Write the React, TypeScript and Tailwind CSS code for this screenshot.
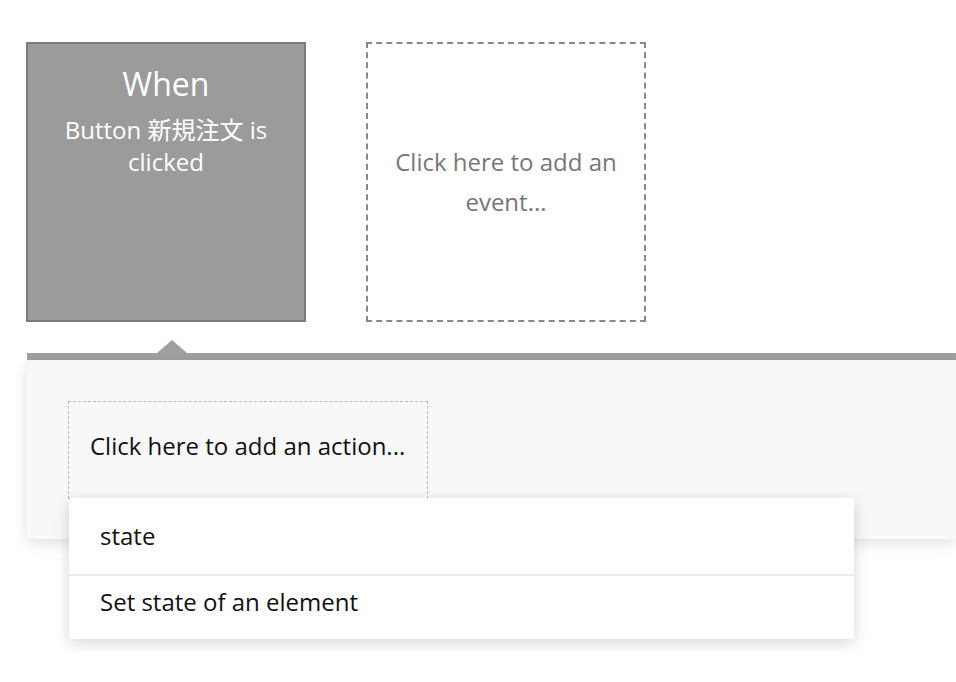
export default function App() {
  return (
    <div className="h-[682px] w-[956px] overflow-hidden bg-white font-['Open_Sans','Noto_Sans_CJK_JP',sans-serif]">
      <div className="flex gap-[60px] pl-[26px] pt-[42px]">
        <div className="flex h-[280px] w-[280px] flex-col items-center border-2 border-[#7b7b7b] bg-[#9b9b9b] pt-[20px] text-center text-white">
          <div className="text-[32px] leading-[40px]">When</div>
          <div className="mt-[10px] px-[24px] text-[24px] leading-[32px]">Button 新規注文 is clicked</div>
        </div>
        <div className="flex h-[280px] w-[280px] items-center justify-center border-2 border-dashed border-[#888] px-[24px] text-center text-[24px] leading-[40px] text-[#777]">
          Click here to add an event...
        </div>
      </div>

      <div className="relative ml-[27px] mt-[31px]">
        <div className="absolute left-[130px] top-[-13px] h-0 w-0 border-x-[15px] border-b-[13px] border-x-transparent border-b-[#a0a0a0]" />
        <div className="h-[7px] bg-[#a0a0a0]" />
        <div className="h-[179px] bg-[#f8f8f8] px-[41px] pt-[41px] shadow-[0_4px_14px_rgba(0,0,0,0.12)]">
          <div className="relative h-[98px] w-[360px] border border-dashed border-[#bbb] pl-[21px] pt-[29px] text-[24px] leading-[30px] text-[#111]">
            Click here to add an action...
            <div className="absolute left-0 top-[96px] w-[785px] rounded-[3px] bg-white text-[24px] leading-[32px] text-[#111] shadow-[0_4px_16px_rgba(0,0,0,0.16)]">
              <div className="flex h-[78px] items-center border-b-2 border-[#ebebeb] pl-[31px]">state</div>
              <div className="h-[63px] pl-[31px] pt-[10px]">Set state of an element</div>
            </div>
          </div>
        </div>
      </div>
    </div>
  );
}
